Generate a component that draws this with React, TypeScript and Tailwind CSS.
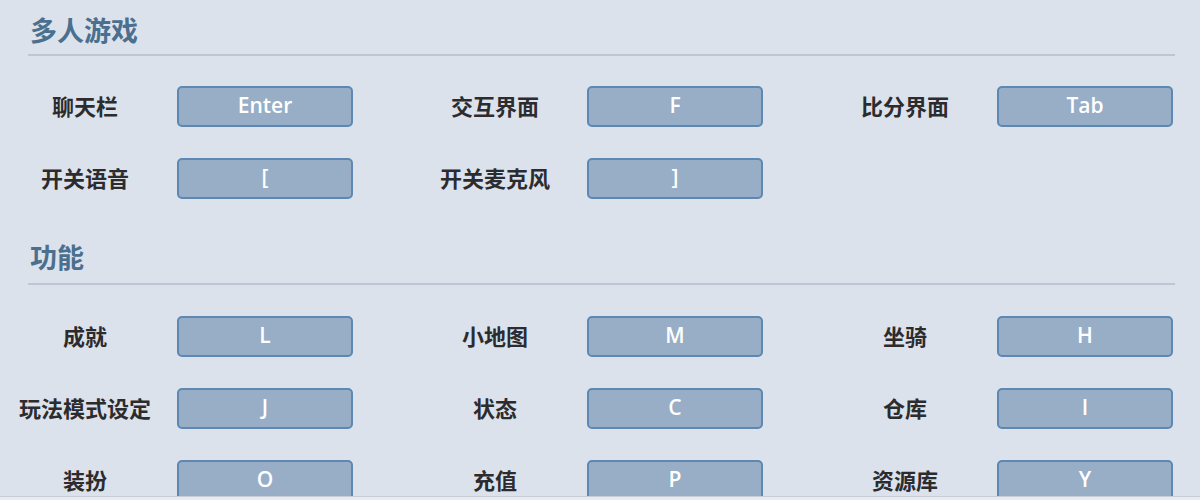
type Bind = { label: string; key: string };

const multiplayer: Bind[] = [
  { label: "聊天栏", key: "Enter" },
  { label: "交互界面", key: "F" },
  { label: "比分界面", key: "Tab" },
  { label: "开关语音", key: "[" },
  { label: "开关麦克风", key: "]" },
];

const features: Bind[] = [
  { label: "成就", key: "L" },
  { label: "小地图", key: "M" },
  { label: "坐骑", key: "H" },
  { label: "玩法模式设定", key: "J" },
  { label: "状态", key: "C" },
  { label: "仓库", key: "I" },
  { label: "装扮", key: "O" },
  { label: "充值", key: "P" },
  { label: "资源库", key: "Y" },
];

const font = { fontFamily: '"Noto Sans", "Noto Sans CJK SC", sans-serif' };
const keyFont = { fontFamily: '"Open Sans", "Noto Sans", sans-serif' };

function SectionTitle({ title, top }: { title: string; top: string }) {
  return (
    <div className="mx-[28px] mr-[25px]">
      <div
        className={`${top} h-[54px] flex items-center pl-[2px] text-[27px] font-bold text-[#4b6f8e]`}
      >
        {title}
      </div>
      <div className="h-[2px] bg-[#bcc6d4]" />
    </div>
  );
}

function KeyRow({ items }: { items: Bind[] }) {
  return (
    <div className="grid grid-cols-[repeat(3,410px)]">
      {items.map((item) => (
        <div key={item.label} className="h-[72px] flex items-center">
          <div className="w-[170px] text-center text-[22px] font-semibold text-[#2c2c2e]">
            {item.label}
          </div>
          <div
            className="ml-[7px] w-[176px] h-[41px] flex items-center justify-center rounded-[5px] border-2 border-[#5c88b3] bg-[#97aec6] text-[21px] font-semibold text-white"
            style={keyFont}
          >
            {item.key}
          </div>
        </div>
      ))}
    </div>
  );
}

export default function App() {
  return (
    <div className="w-[1200px] h-[500px] bg-[#dce2ec] overflow-hidden" style={font}>
      <div className="h-[496px] overflow-hidden">
        <SectionTitle title="多人游戏" top="pt-[8px]" />
        <div className="pt-[14px]">
          <KeyRow items={multiplayer} />
        </div>
        <div className="pt-[15px]">
          <SectionTitle title="功能" top="pt-[4px]" />
        </div>
        <div className="pt-[15px]">
          <KeyRow items={features} />
        </div>
      </div>
      <div className="h-[4px] border-t border-[#c5ccd6] bg-[#e8ecf2]" />
    </div>
  );
}
